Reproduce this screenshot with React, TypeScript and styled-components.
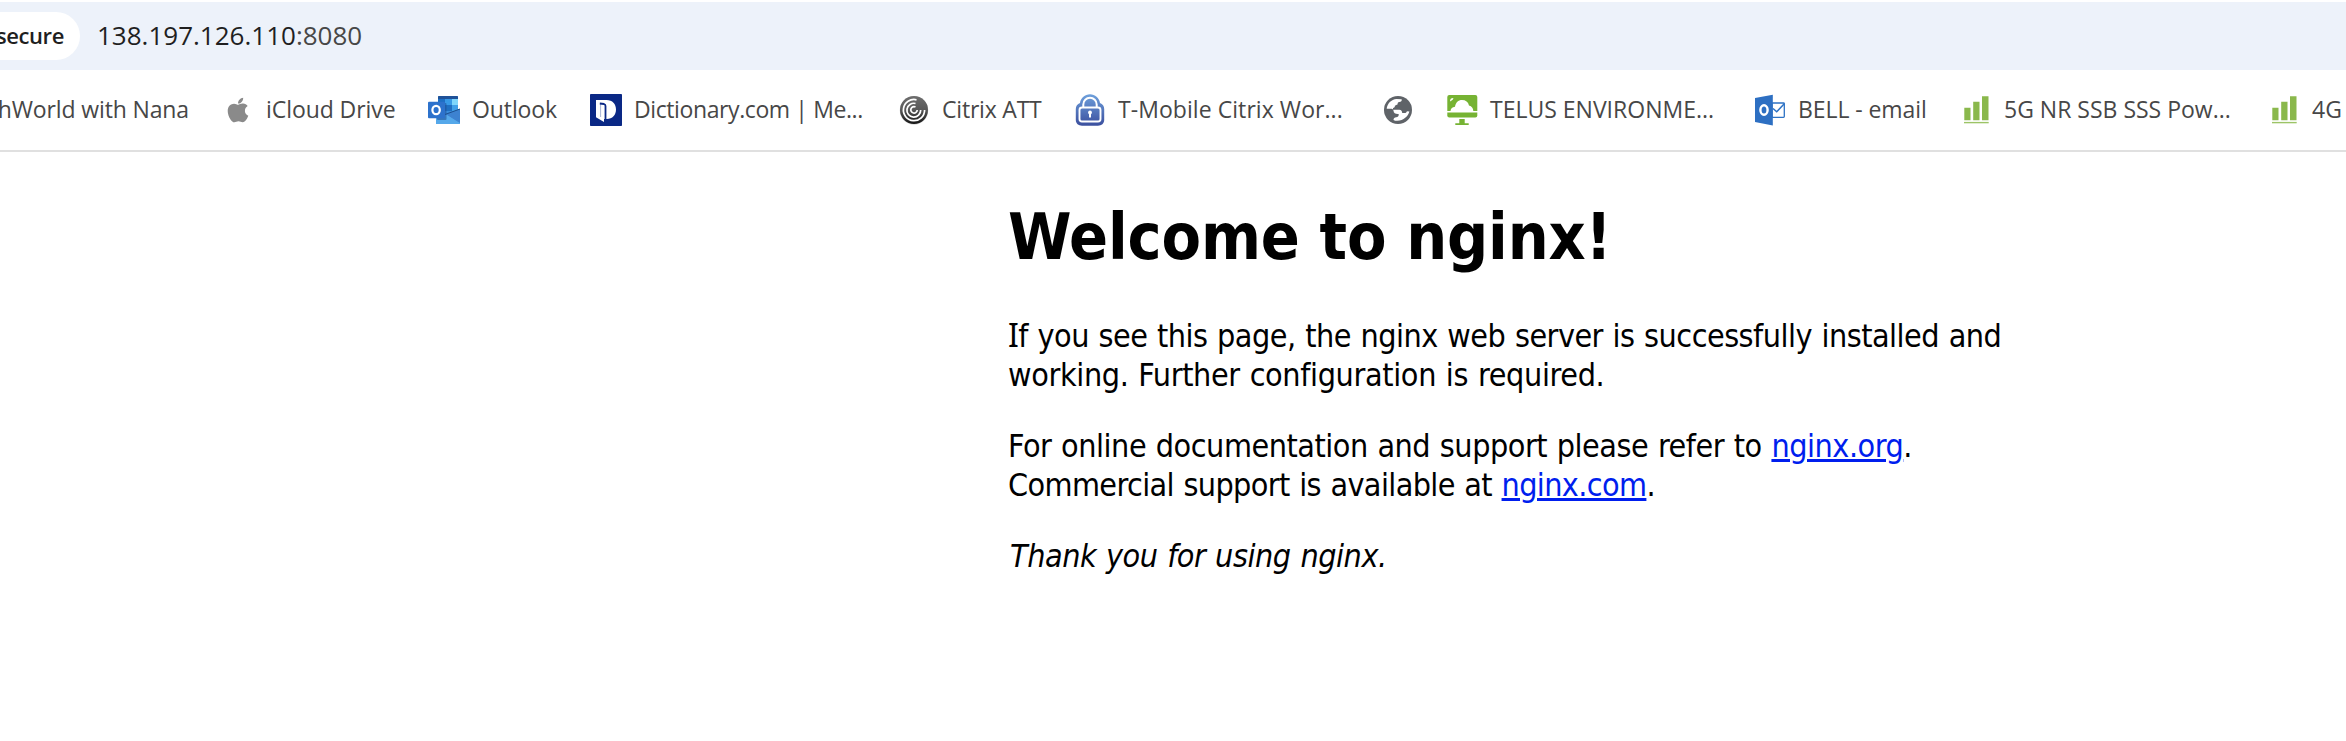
import React from 'react';
import styled, { createGlobalStyle } from 'styled-components';
import { FaApple } from 'react-icons/fa';

const GlobalStyle = createGlobalStyle`
  *, *::before, *::after { box-sizing: border-box; }
  body {
    margin: 0;
    background: #fff;
    overflow: hidden;
  }
`;

const Window = styled.div`
  display: flex;
  flex-direction: column;
  width: 100%;
  height: 741px;
  padding-top: 2px;
  overflow: hidden;
  background: #fff;
`;

const AddressBar = styled.header`
  display: flex;
  flex: none;
  align-items: center;
  gap: 17px;
  height: 68px;
  background: #edf2fa;
  font-family: 'Open Sans', 'Noto Sans', sans-serif;
`;

const SecurityChip = styled.div`
  display: flex;
  flex: none;
  align-items: center;
  justify-content: flex-end;
  width: 80px;
  height: 48px;
  padding: 0 16px 2px 0;
  border-radius: 0 24px 24px 0;
  background: #fff;
  color: #1f1f1f;
  font-size: 22px;
  font-weight: 600;
  letter-spacing: -0.4px;
  white-space: nowrap;
  overflow: hidden;
`;

const Url = styled.div`
  padding-bottom: 2px;
  color: #1f1f1f;
  font-size: 26px;
  white-space: nowrap;
`;

const Port = styled.span`
  color: #474747;
`;

const BookmarksBar = styled.nav`
  display: flex;
  flex: none;
  align-items: center;
  height: 82px;
  border-bottom: 2px solid #e0e0e0;
  overflow: hidden;
`;

const Bookmark = styled.a<{ $width: number; $end?: boolean }>`
  display: flex;
  flex: none;
  align-items: center;
  justify-content: ${(p) => (p.$end ? 'flex-end' : 'flex-start')};
  gap: 12px;
  width: ${(p) => p.$width}px;
  padding-right: ${(p) => (p.$end ? 33 : 0)}px;
`;

const BookmarkIcon = styled.span`
  display: flex;
  flex: none;
  align-items: center;
  justify-content: center;
  width: 32px;
  height: 32px;
  color: #8a8a8a;

  svg { display: block; }
`;

const BookmarkLabel = styled.span<{ $tracking: number }>`
  padding-bottom: 2px;
  color: #474747;
  font-family: 'Open Sans', 'Noto Sans', sans-serif;
  font-size: 23px;
  letter-spacing: ${(p) => p.$tracking}px;
  white-space: nowrap;
`;

const Page = styled.main`
  width: 1120px;
  margin-left: 1008px;
  padding-top: 47px;
  color: #000;
  font-family: 'DejaVu Sans Condensed', 'DejaVu Sans', sans-serif;
  font-size: 32px;
  line-height: 39px;
`;

const Heading = styled.h1`
  margin: 0 0 41px;
  font-size: 64px;
  font-weight: 700;
  line-height: 77px;
  letter-spacing: -0.16px;
`;

const Paragraph = styled.p`
  margin: 0 0 32px;
`;

const Line = styled.span<{ $tracking: number }>`
  display: block;
  letter-spacing: ${(p) => p.$tracking}px;
  word-spacing: 1px;
  white-space: nowrap;
`;

const Closing = styled(Line)`
  padding-left: 2px;
`;

const SlabCapital = styled.span`
  font-family: 'Noto Sans', sans-serif;
  line-height: 1;
`;

const Link = styled.a`
  color: #001eee;
  text-decoration: underline;
  text-decoration-thickness: 3px;
  text-underline-offset: 2px;
`;

const Icon = ({ children }: { children: React.ReactNode }) => (
  <svg width="32" height="32" viewBox="0 0 32 32" fill="none">
    {children}
  </svg>
);

const OutlookIcon = () => (
  <Icon>
    <rect x="10" y="2" width="20" height="20" rx="1" fill="#3a8ddb" />
    <path d="M10 5V3a1 1 0 0 1 1-1h18a1 1 0 0 1 1 1v2z" fill="#1f5299" />
    <rect x="10" y="5" width="7" height="6" fill="#1d6fc4" />
    <rect x="17" y="5" width="7" height="6" fill="#3799e6" />
    <rect x="24" y="5" width="6" height="6" fill="#7fd6fb" />
    <rect x="17" y="11" width="7" height="6" fill="#1f6fc2" />
    <rect x="24" y="11" width="6" height="6" fill="#3f9fe8" />
    <path d="M8 18l12 4 12-7v15H8z" fill="#55a8ea" />
    <path d="M17 20l15-5v14z" fill="#3d82d0" />
    <path d="M17 19.500l15 10.500H8V25z" fill="#55a8ea" />
    <path d="M17 20.500L32 15" stroke="#1c4f8f" strokeWidth="1" />
    <rect x="9" y="9" width="9.500" height="17" rx="1" fill="#1d4f94" opacity=".55" />
    <rect x="0" y="7.700" width="17" height="16.600" rx="1" fill="#2d72cc" />
    <ellipse cx="8.100" cy="16" rx="3.700" ry="4.200" stroke="#fff" strokeWidth="2.200" />
  </Icon>
);

const DictionaryIcon = () => (
  <Icon>
    <rect width="32" height="32" rx="0.800" fill="#0a2885" />
    <path d="M6 6h10.500C22.500 6 26 10 26 15.500S22.500 25 16.800 25H14v3L6 23.200z" fill="#fff" />
    <path d="M9.800 9.500l4.200.500q1.500.4 1.500 2V26" stroke="#0a2885" strokeWidth="1.800" />
    <path d="M10.600 10v13" stroke="#0a2885" strokeWidth="0.700" opacity=".5" />
  </Icon>
);

const CitrixIcon = () => (
  <Icon>
    <defs>
      <linearGradient id="citrix" x1="0" y1="0" x2="0" y2="1">
        <stop offset="0" stopColor="#6e6e6e" />
        <stop offset=".5" stopColor="#585858" />
        <stop offset="1" stopColor="#141414" />
      </linearGradient>
    </defs>
    <circle cx="16" cy="16.500" r="14.200" fill="#bbb" opacity=".6" />
    <circle cx="16" cy="16" r="14" fill="url(#citrix)" />
    <g stroke="#fff" strokeWidth="1.700">
      <path d="M18.500 5.800A10.600 10.600 0 1 0 26.600 16" />
      <path d="M17.500 9.500A6.900 6.900 0 1 0 22.700 16" />
      <path d="M17.500 13A3.200 3.200 0 1 0 19.200 16" />
    </g>
  </Icon>
);

const LockIcon = () => (
  <Icon>
    <defs>
      <linearGradient id="lock" x1="0" y1="0" x2="0" y2="1">
        <stop offset="0" stopColor="#6ea0dc" />
        <stop offset="1" stopColor="#3b4f9e" />
      </linearGradient>
    </defs>
    <path
      d="M16 0.300c5 0 9.300 3.600 10 8.700 2.600 1 4.200 3.200 4.200 6V26c0 3.500-2.700 5.700-6.200 5.700H8c-3.500 0-6.200-2.200-6.200-5.700V15c0-2.800 1.600-5 4.200-6 .7-5.100 5-8.700 10-8.700z"
      fill="url(#lock)"
    />
    <path d="M9.300 14v-3.500a6.700 6.700 0 0 1 13.400 0V14" stroke="#fff" strokeWidth="2" />
    <rect x="5.500" y="13.500" width="21" height="14" rx="2.500" stroke="#fff" strokeWidth="1.900" />
    <circle cx="16" cy="18.500" r="1.900" fill="#fff" />
    <path d="M15 19h2v4.500h-2z" fill="#fff" />
  </Icon>
);

const GlobeIcon = () => (
  <Icon>
    <circle cx="16" cy="16" r="14" fill="#5f6368" />
    <path
      d="M4.700 14.800C5.200 9.500 9.300 5.300 14.500 4.900l5.200.3c.3 1.800-.6 2.700-2.500 2.900-1.300.2-1.700 1-1.500 2.100l-2.800 1.600c0 1.500-.5 2-1.900 2.200v1.800h6.300c2 .2 2.900 1.300 2.900 3.200h2.500c1.200 0 1.900-.6 2.200-1.800l2.500.3c-1.300 4.700-5.700 9.200-12.200 9.300-1.500 0-2.700-.4-3.700-.9.200-1.700 1-2.600 2.700-2.700 1.600-.1 2.500-.8 2.500-2.400l-.1-.8c-3.200.2-4.900-.9-5.100-3.200-.2-1.700-1.400-2-3.400-2z"
      fill="#fff"
    />
  </Icon>
);

const TelusIcon = () => (
  <Icon>
    <path d="M3.300 1h26a2 2 0 0 1 2 2v14h-30V3a2 2 0 0 1 2-2z" fill="#76b333" />
    <path d="M4.500 17c.3-2.600 1.800-4 4.500-4.200C9.700 8.500 12.200 6 16 6c3.800 0 6.100 1.900 7 5.500 2.800.8 4.200 2.600 4.300 5.500z" fill="#fff" />
    <path d="M4 7.500C4 5 5 4 7.500 4l-.8 1.800L4.800 7z" fill="#fff" />
    <path d="M1.300 18.500h30v3a2 2 0 0 1-2 2h-26a2 2 0 0 1-2-2z" fill="#76b333" />
    <path d="M13.300 25h5.400v4.200h4v1.800H9.300v-1.800h4z" fill="#76b333" />
  </Icon>
);

const BellMailIcon = () => (
  <Icon>
    <rect x="18" y="9" width="12.300" height="14.300" rx="0.800" fill="#fff" stroke="#2d72c4" strokeWidth="1.300" />
    <path d="M19 14.500l3.700 3.300L30.500 9.500" stroke="#2d72c4" strokeWidth="1.500" />
    <path d="M1 4l17.800-3.200v30.600L1 28z" fill="#2d6fc2" />
    <ellipse cx="10" cy="16" rx="3.600" ry="4.700" stroke="#fff" strokeWidth="2.400" />
  </Icon>
);

const SignalIcon = () => (
  <Icon>
    <path d="M4.300 13.700h6.200v12.600H4.300zM13.200 7.700h6.300v18.600h-6.300zM22 2.200h6.500v24.100H22z" fill="#8ab84c" />
    <path d="M4 27.900h24.700v1.400H4z" fill="#9cc466" />
  </Icon>
);

type BookmarkData = {
  label?: string;
  width: number;
  tracking?: number;
  icon: React.ReactNode;
};

const bookmarks: BookmarkData[] = [
  { label: 'iCloud Drive', width: 206, tracking: -0.07, icon: <FaApple size={28} /> },
  { label: 'Outlook', width: 162, tracking: -0.1, icon: <OutlookIcon /> },
  { label: 'Dictionary.com | Me...', width: 308, tracking: -0.4, icon: <DictionaryIcon /> },
  { label: 'Citrix ATT', width: 176, tracking: -0.2, icon: <CitrixIcon /> },
  { label: 'T-Mobile Citrix Wor...', width: 308, tracking: 0.06, icon: <LockIcon /> },
  { width: 64, icon: <GlobeIcon /> },
  { label: 'TELUS ENVIRONME...', width: 308, icon: <TelusIcon /> },
  { label: 'BELL - email', width: 206, tracking: -0.08, icon: <BellMailIcon /> },
  { label: '5G NR SSB SSS Pow...', width: 308, icon: <SignalIcon /> },
  { label: '4G', width: 308, icon: <SignalIcon /> },
];

export default function App() {
  return (
    <Window>
      <GlobalStyle />
      <AddressBar>
        <SecurityChip>secure</SecurityChip>
        <Url>
          138.197.126.110<Port>:8080</Port>
        </Url>
      </AddressBar>
      <BookmarksBar>
        <Bookmark $width={222} $end>
          <BookmarkLabel $tracking={-0.13}>hWorld with Nana</BookmarkLabel>
        </Bookmark>
        {bookmarks.map((b, i) => (
          <Bookmark key={i} $width={b.width}>
            <BookmarkIcon>{b.icon}</BookmarkIcon>
            {b.label && <BookmarkLabel $tracking={b.tracking ?? 0}>{b.label}</BookmarkLabel>}
          </Bookmark>
        ))}
      </BookmarksBar>
      <Page>
        <Heading>Welcome to nginx!</Heading>
        <Paragraph>
          <Line $tracking={-0.52}>
            <SlabCapital>I</SlabCapital>f you see this page, the nginx web server is successfully installed and
          </Line>
          <Line $tracking={-0.35}>working. Further configuration is required.</Line>
        </Paragraph>
        <Paragraph>
          <Line $tracking={-0.47}>
            For online documentation and support please refer to <Link>nginx.org</Link>.
          </Line>
          <Line $tracking={-0.62}>
            Commercial support is available at <Link>nginx.com</Link>.
          </Line>
        </Paragraph>
        <Paragraph>
          <Closing as="em" $tracking={-0.44}>
            Thank you for using nginx.
          </Closing>
        </Paragraph>
      </Page>
    </Window>
  );
}
